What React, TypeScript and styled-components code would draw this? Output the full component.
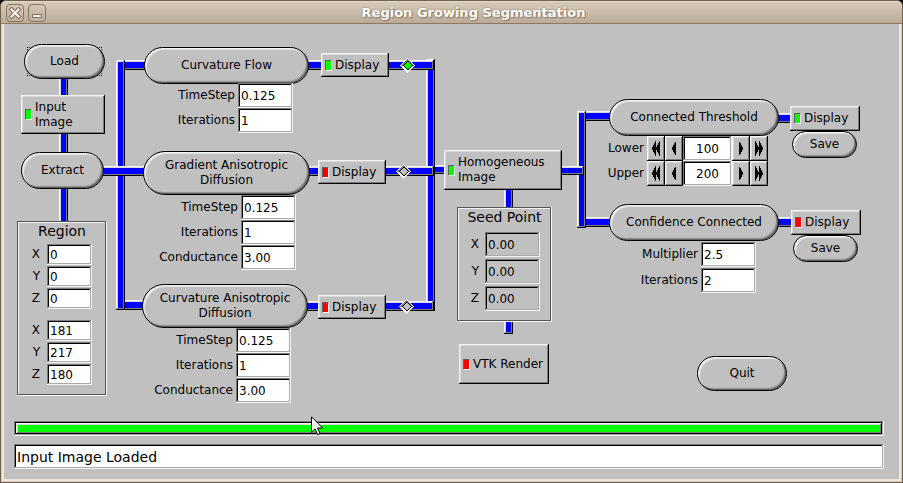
import React, { useId } from "react";
import styled, { createGlobalStyle, css } from "styled-components";

const GlobalStyle = createGlobalStyle`
  *, *::before, *::after { box-sizing: border-box; }
  body { margin: 0; background: #000; }
  body, button, input { font-family: "DejaVu Sans", sans-serif; font-size: 12px; line-height: 15px; color: #000; }
`;

const face = "#c0c0c0";

/* Two-pixel bevels in the style of the toolkit's up and down boxes. */
const raised = css`
  box-shadow: inset -1px -1px #000, inset 1px 1px #f4f4f4, inset -2px -2px #7c7c7c, inset 2px 2px #d8d8d8;
`;
const sunken = css`
  box-shadow: inset -1px -1px #f4f4f4, inset 1px 1px #7c7c7c, inset -2px -2px #aaa, inset 2px 2px #000;
`;

type Point = { $x: number; $y: number };
const placed = css<Point>`
  position: absolute;
  left: ${(p) => p.$x}px;
  top: ${(p) => p.$y}px;
`;

const Window = styled.div`
  display: flex;
  flex-direction: column;
  min-height: 100vh;
  border: 1px solid #6f614f;
  border-radius: 6px 6px 0 0;
  background: #d9cbb9;
  overflow: hidden;
`;

const TitleBar = styled.header`
  display: flex;
  align-items: center;
  gap: 4px;
  height: 23px;
  padding: 0 5px;
  border-top: 1px solid #e2d9cd;
  border-bottom: 1px solid #8c7963;
  background: linear-gradient(#d5c9b9, #c9bbaa 50%, #bcab98);
`;

const Title = styled.h1`
  flex: 1;
  margin: 0;
  text-align: center;
  font-size: 13px;
  font-weight: bold;
  line-height: 20px;
  color: #fff;
  text-shadow: 1px 1px 1px #8c7963, 0 0 2px #8c7963;
`;

const WindowButton = styled.button`
  display: flex;
  width: 18px;
  height: 18px;
  padding: 0;
  border: 1px solid #857461;
  border-radius: 4px;
  background: linear-gradient(#d3c7b8, #c0b09e);
`;

const Content = styled.main`
  display: flex;
  flex: 1;
  flex-direction: column;
  margin: 0 1px 1px 1px;
  border: 2px solid #f0e8de;
  border-top: 0;
  background: ${face};
`;

const Canvas = styled.section`
  position: relative;
  flex: 1;
  min-height: 397px;
`;

const Wire = styled.div<Point & { $w: number; $h: number }>`
  ${placed}
  width: ${(p) => p.$w}px;
  height: ${(p) => p.$h}px;
  background: #00f;
  ${raised}
`;

const Pill = styled.button<{ $w: number; $h: number }>`
  position: relative;
  width: ${(p) => p.$w}px;
  height: ${(p) => p.$h}px;
  padding: 0;
  border: 1px solid #000;
  border-radius: 22px;
  background: ${face};
  box-shadow: inset -1px -1px #606060, inset 1px 1px #f4f4f4, inset -2px -2px 1px #8c8c8c, inset 2px 2px 1px #e0e0e0;
  white-space: pre-line;
`;

const PlacedPill = styled(Pill)<Point>`
  ${placed}
`;

const FocusCorners = styled.div<Point>`
  ${placed}
  width: 75px;
  height: 29px;
  border: 1px dotted #000;
`;

const LightButton = styled.button<{ $w: number; $h: number }>`
  display: flex;
  align-items: center;
  gap: 3px;
  width: ${(p) => p.$w}px;
  height: ${(p) => p.$h}px;
  padding: 0 4px;
  border: 0;
  background: ${face};
  ${raised}
  text-align: left;
  white-space: pre-line;
`;

const PlacedLightButton = styled(LightButton)<Point>`
  ${placed}
`;

const Led = styled.span<{ $on: boolean }>`
  flex: none;
  width: 7px;
  height: 11px;
  border: 1px solid;
  border-color: #606060 #f4f4f4 #f4f4f4 #606060;
  background: ${(p) => (p.$on ? "#0f0" : "#f00")};
`;

const OutputGroup = styled.div<Point>`
  ${placed}
  display: flex;
  flex-direction: column;
  align-items: flex-start;
  & > ${Pill} { margin-left: 2px; }
`;

const Choice = styled.label<Point>`
  ${placed}
  display: block;
  width: 15px;
  height: 15px;
`;

const HiddenRadio = styled.input`
  position: absolute;
  inset: 0;
  margin: 0;
  opacity: 0;
`;

const Fields = styled.div<{ $label: number; $gap: number; $space: number }>`
  display: grid;
  grid-template-columns: ${(p) => p.$label}px max-content;
  column-gap: ${(p) => p.$space}px;
  row-gap: ${(p) => p.$gap}px;
  align-items: center;
  & > label { text-align: right; }
`;

const PlacedFields = styled(Fields)<Point>`
  ${placed}
`;

const TextBox = styled.input<{ $w: number; $h: number }>`
  width: ${(p) => p.$w}px;
  height: ${(p) => p.$h}px;
  padding: 0 3px;
  border: 0;
  outline: 0;
  background: ${(p) => (p.readOnly ? face : "#fff")};
  ${sunken}
`;

const Frame = styled.section<Point & { $w: number; $h: number }>`
  ${placed}
  width: ${(p) => p.$w}px;
  height: ${(p) => p.$h}px;
  background: ${face};
  box-shadow: inset -1px -1px #f4f4f4, inset 1px 1px #555, inset -2px -2px #555, inset 2px 2px #f4f4f4;
`;

const FrameTitle = styled.h2`
  margin: 0;
  padding-top: 1px;
  text-align: center;
  font-size: 14px;
  font-weight: normal;
  line-height: 18px;
`;

const FrameBody = styled.div`
  display: flex;
  flex-direction: column;
  gap: 11px;
  padding-top: 4px;
`;

const SeedBody = styled(FrameBody)`
  padding-top: 6px;
`;

const CounterRow = styled.div`
  display: flex;
`;

const StepButton = styled.button`
  display: flex;
  align-items: center;
  justify-content: center;
  width: 18px;
  height: 25px;
  padding: 0;
  border: 0;
  background: ${face};
  ${raised}
`;

const CounterBox = styled(TextBox)`
  text-align: center;
`;

const Footer = styled.footer`
  display: flex;
  flex-direction: column;
  gap: 8px;
  padding: 0 15px 10px 10px;
`;

const ProgressTrack = styled.div`
  height: 15px;
  padding: 2px;
  ${sunken}
`;

const ProgressFill = styled.div`
  height: 11px;
  background: #0f0;
  ${raised}
`;

const StatusBox = styled.input`
  width: 100%;
  height: 25px;
  padding: 0 3px;
  border: 0;
  outline: 0;
  background: #fff;
  font-size: 14px;
  ${sunken}
`;

const Pointer = styled.svg<Point>`
  ${placed}
  z-index: 2;
  pointer-events: none;
`;

type FieldSpec = [label: string, value: string];

function FieldRows({ rows, w, h, readOnly }: { rows: FieldSpec[]; w: number; h: number; readOnly?: boolean }) {
  const id = useId();
  return (
    <>
      {rows.map(([label, value]) => (
        <React.Fragment key={label}>
          <label htmlFor={id + label}>{label}</label>
          <TextBox id={id + label} $w={w} $h={h} defaultValue={value} readOnly={readOnly} />
        </React.Fragment>
      ))}
    </>
  );
}

function Diamond({ x, y, checked, label }: { x: number; y: number; checked?: boolean; label: string }) {
  return (
    <Choice $x={x} $y={y}>
      <HiddenRadio type="radio" name="source" defaultChecked={checked} aria-label={label} />
      <svg width="15" height="15" viewBox="0 0 15 15" shapeRendering="crispEdges">
        <path d="M0 7.5 7.5 0 15 7.5 7.5 15Z" fill="#f4f4f4" />
        <path d="M1 7.5 7.5 1 14 7.5Z" fill="#777" />
        <path d="M2.5 7.5 7.5 2.5 12.5 7.5 7.5 12.5Z" fill="#000" />
        <path d="M3.5 7.5 7.5 3.5 11.5 7.5 7.5 11.5Z" fill={checked ? "#0f0" : face} />
      </svg>
    </Choice>
  );
}

function Arrow({ double, right }: { double?: boolean; right?: boolean }) {
  return (
    <svg width="12" height="15" viewBox="0 0 12 15" shapeRendering="crispEdges">
      <g transform={right ? "matrix(-1 0 0 1 12 0)" : undefined}>
        {double ? (
          <>
            <path d="M5 0h1v15h-1v-2h-1v-2h-1v-2h-1v-3h1v-2h1v-2h1z" />
            <path d="M9 0h1v15h-1v-2h-1v-2h-1v-2h-1v-3h1v-2h1v-2h1z" />
          </>
        ) : (
          <path d="M7 1h1v13h-1v-1h-1v-2h-1v-2h-1v-3h1v-2h1v-2h1z" />
        )}
      </g>
    </svg>
  );
}

function Counter({ label, value }: { label: string; value: string }) {
  const id = useId();
  return (
    <>
      <label htmlFor={id}>{label}</label>
      <CounterRow>
        <StepButton aria-label={`${label} fast down`}><Arrow double /></StepButton>
        <StepButton aria-label={`${label} down`}><Arrow /></StepButton>
        <CounterBox id={id} $w={49} $h={25} defaultValue={value} />
        <StepButton aria-label={`${label} up`}><Arrow right /></StepButton>
        <StepButton aria-label={`${label} fast up`}><Arrow double right /></StepButton>
      </CounterRow>
    </>
  );
}

/* x, y, width, height; later wires are drawn over earlier ones. */
const wires: [number, number, number, number][] = [
  [55, 50, 9, 152],
  [114, 36, 36, 10],
  [114, 276, 36, 10],
  [112, 36, 9, 250],
  [96, 142, 49, 10],
  [424, 141, 20, 9],
  [422, 35, 9, 252],
  [300, 36, 130, 10],
  [300, 142, 130, 10],
  [300, 277, 130, 10],
  [575, 87, 35, 10],
  [575, 193, 35, 10],
  [573, 87, 9, 117],
  [550, 142, 30, 9],
  [500, 160, 9, 150],
  [770, 89, 20, 10],
  [770, 193, 20, 10],
];

export default function App() {
  return (
    <>
      <GlobalStyle />
      <Window>
        <TitleBar>
          <WindowButton aria-label="Close">
            <svg width="16" height="16" viewBox="0 0 16 16">
              <path d="M4.5 4.5 11.5 11.5M11.5 4.5 4.5 11.5" stroke="#857461" strokeWidth="4.4" strokeLinecap="square" />
              <path d="M4.5 4.5 11.5 11.5M11.5 4.5 4.5 11.5" stroke="#f5f0ea" strokeWidth="2.2" strokeLinecap="square" />
            </svg>
          </WindowButton>
          <WindowButton aria-label="Minimize">
            <svg width="16" height="16" viewBox="0 0 16 16" shapeRendering="crispEdges">
              <rect x="3" y="9" width="10" height="4" fill="#857461" />
              <rect x="4" y="10" width="8" height="2" fill="#f5f0ea" />
            </svg>
          </WindowButton>
          <Title>Region Growing Segmentation</Title>
        </TitleBar>

        <Content>
          <Canvas>
            {wires.map(([x, y, w, h]) => (
              <Wire key={`${x}-${y}`} $x={x} $y={y} $w={w} $h={h} />
            ))}

            <FocusCorners $x={23} $y={23} />
            <PlacedPill $x={20} $y={20} $w={81} $h={35}>Load</PlacedPill>
            <PlacedLightButton $x={17} $y={71} $w={84} $h={39}>
              <Led $on />
              {"Input\nImage"}
            </PlacedLightButton>
            <PlacedPill $x={17} $y={128} $w={83} $h={37}>Extract</PlacedPill>

            <Frame $x={13} $y={197} $w={90} $h={175}>
              <FrameTitle>Region</FrameTitle>
              <FrameBody>
                <Fields $label={23} $gap={1} $space={7}>
                  <FieldRows rows={[["X", "0"], ["Y", "0"], ["Z", "0"]]} w={45} h={21} />
                </Fields>
                <Fields $label={23} $gap={1} $space={7}>
                  <FieldRows rows={[["X", "181"], ["Y", "217"], ["Z", "180"]]} w={45} h={21} />
                </Fields>
              </FrameBody>
            </Frame>

            <PlacedPill $x={140} $y={23} $w={165} $h={37}>Curvature Flow</PlacedPill>
            <PlacedFields $x={144} $y={59} $label={87} $gap={0} $space={3}>
              <FieldRows rows={[["TimeStep", "0.125"], ["Iterations", "1"]]} w={55} h={25} />
            </PlacedFields>
            <PlacedLightButton $x={317} $y={29} $w={68} $h={24}><Led $on />Display</PlacedLightButton>
            <Diamond x={396} y={34} checked label="Use curvature flow" />

            <PlacedPill $x={139} $y={127} $w={167} $h={44}>{"Gradient Anisotropic\nDiffusion"}</PlacedPill>
            <PlacedFields $x={147} $y={171} $label={87} $gap={0} $space={3}>
              <FieldRows rows={[["TimeStep", "0.125"], ["Iterations", "1"], ["Conductance", "3.00"]]} w={55} h={25} />
            </PlacedFields>
            <PlacedLightButton $x={314} $y={136} $w={68} $h={24}><Led $on={false} />Display</PlacedLightButton>
            <Diamond x={392} y={140} label="Use gradient anisotropic diffusion" />

            <PlacedPill $x={138} $y={260} $w={166} $h={44}>{"Curvature Anisotropic\nDiffusion"}</PlacedPill>
            <PlacedFields $x={142} $y={304} $label={87} $gap={0} $space={3}>
              <FieldRows rows={[["TimeStep", "0.125"], ["Iterations", "1"], ["Conductance", "3.00"]]} w={55} h={25} />
            </PlacedFields>
            <PlacedLightButton $x={314} $y={271} $w={68} $h={24}><Led $on={false} />Display</PlacedLightButton>
            <Diamond x={395} y={275} label="Use curvature anisotropic diffusion" />

            <PlacedLightButton $x={440} $y={126} $w={118} $h={40}>
              <Led $on />
              {"Homogeneous\nImage"}
            </PlacedLightButton>
            <Frame $x={453} $y={183} $w={95} $h={115}>
              <FrameTitle>Seed Point</FrameTitle>
              <SeedBody>
                <Fields $label={22} $gap={2} $space={6}>
                  <FieldRows rows={[["X", "0.00"], ["Y", "0.00"], ["Z", "0.00"]]} w={55} h={25} readOnly />
                </Fields>
              </SeedBody>
            </Frame>
            <PlacedLightButton $x={455} $y={320} $w={90} $h={40}><Led $on={false} />VTK Render</PlacedLightButton>

            <PlacedPill $x={605} $y={75} $w={170} $h={37}>Connected Threshold</PlacedPill>
            <PlacedFields $x={600} $y={112} $label={40} $gap={0} $space={3}>
              <Counter label="Lower" value="100" />
              <Counter label="Upper" value="200" />
            </PlacedFields>
            <OutputGroup $x={786} $y={82}>
              <LightButton $w={70} $h={25}><Led $on />Display</LightButton>
              <Pill $w={65} $h={27}>Save</Pill>
            </OutputGroup>

            <PlacedPill $x={605} $y={180} $w={170} $h={37}>Confidence Connected</PlacedPill>
            <PlacedFields $x={607} $y={218} $label={87} $gap={1} $space={3}>
              <FieldRows rows={[["Multiplier", "2.5"], ["Iterations", "2"]]} w={55} h={25} />
            </PlacedFields>
            <OutputGroup $x={787} $y={186}>
              <LightButton $w={70} $h={25}><Led $on={false} />Display</LightButton>
              <Pill $w={65} $h={27}>Save</Pill>
            </OutputGroup>

            <PlacedPill $x={693} $y={332} $w={90} $h={35}>Quit</PlacedPill>

            <Pointer $x={307} $y={392} width="13" height="20" viewBox="0 0 13 20">
              <path d="M.5.8V16.2L4 12.9 6.6 18.6 9 17.5 6.5 12H11.6Z" fill="#fff" stroke="#000" />
            </Pointer>
          </Canvas>

          <Footer>
            <ProgressTrack role="progressbar" aria-label="Progress" aria-valuenow={100}>
              <ProgressFill />
            </ProgressTrack>
            <StatusBox aria-label="Status" readOnly defaultValue="Input Image Loaded" />
          </Footer>
        </Content>
      </Window>
    </>
  );
}
